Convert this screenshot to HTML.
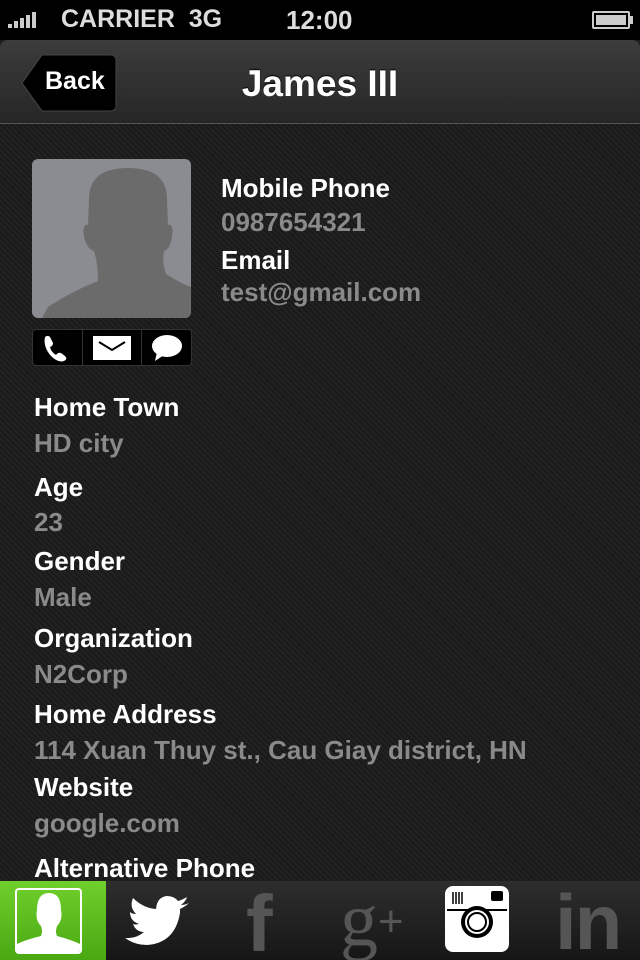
<!DOCTYPE html>
<html><head><meta charset="utf-8"><style>
*{margin:0;padding:0;box-sizing:border-box}
html,body{width:640px;height:960px;overflow:hidden}
body{background:#1e1e1e;font-family:"Liberation Sans",Arial,Helvetica,sans-serif;position:relative;
background-image:repeating-linear-gradient(45deg,#222 0 2px,#1a1a1a 2px 4px)}
.t{position:absolute;left:0;font-weight:bold;font-size:26px;line-height:28px;white-space:nowrap}
.l{color:#fff}.v{color:#8a8a8a}
</style></head><body>
<div style="position:absolute;left:0;top:0;width:640px;height:40px;background:#000"></div>
<div style="position:absolute;left:8px;top:12px;display:flex;align-items:flex-end;gap:2px">
<div style="width:4px;height:4px;background:#ccc"></div><div style="width:4px;height:7px;background:#ccc"></div><div style="width:4px;height:10px;background:#ccc"></div><div style="width:4px;height:13px;background:#ccc"></div><div style="width:4px;height:16px;background:#ccc"></div></div>
<div style="position:absolute;left:61px;top:5px;color:#ddd;font-size:25px;font-weight:bold">CARRIER &nbsp;3G</div>
<div style="position:absolute;left:286px;top:5px;color:#ddd;font-size:26px;font-weight:bold">12:00</div>
<div style="position:absolute;left:592px;top:11px;width:38px;height:18px;border:2px solid #ccc;border-radius:2px;padding:2px"><div style="background:#ccc;width:100%;height:100%"></div></div>
<div style="position:absolute;left:630px;top:16px;width:3px;height:8px;background:#ccc"></div>
<div style="position:absolute;left:0;top:40px;width:640px;height:84px;background:linear-gradient(#3c3c3c,#262626);border-radius:8px 8px 0 0;border-bottom:1px solid #555"></div>
<svg style="position:absolute;left:20px;top:54px" width="98" height="58"><path d="M22 1H90Q96 1 96 7V51Q96 57 90 57H22L2 29Z" fill="#000" stroke="#444" stroke-width="1"/></svg>
<div style="position:absolute;left:45px;top:67px;color:#fff;font-size:25px;font-weight:bold">Back</div>
<div style="position:absolute;left:0;width:640px;top:63px;text-align:center;color:#fff;font-size:37px;font-weight:bold;text-shadow:0 -1px 1px #000">James III</div>
<div style="position:absolute;left:32px;top:159px;width:159px;height:159px;background:#8a8c92;border-radius:6px;overflow:hidden">
<svg width="159" height="159"><path d="M57 40Q57 9 96 9Q135 9 135 40L136 66Q142 64 140 78Q138 90 132 92Q130 105 134 115Q150 125 159 128V159H10L16 148Q40 132 66 122Q66 105 62 92Q55 90 52 78Q50 64 56 66Z" fill="#6b6b6b"/></svg></div>
<div style="position:absolute;left:32px;top:329px;width:160px;height:37px;background:#000;border:1px solid #333;border-radius:4px"></div>
<div style="position:absolute;left:82px;top:330px;width:1px;height:35px;background:#333"></div>
<div style="position:absolute;left:141px;top:330px;width:1px;height:35px;background:#333"></div>
<svg style="position:absolute;left:40px;top:333px" width="30" height="30"><path d="M5 4Q9 1 11 6L13 10Q13 13 10 14Q11 19 16 22Q18 19 21 20L25 23Q28 26 24 28Q18 30 11 23Q3 14 5 4Z" fill="#fff"/></svg>
<svg style="position:absolute;left:93px;top:336px" width="38" height="24"><rect width="38" height="24" fill="#fff"/><path d="M6 6L19 14L32 6" stroke="#000" stroke-width="2" fill="none"/></svg>
<svg style="position:absolute;left:151px;top:334px" width="32" height="28"><ellipse cx="16" cy="12" rx="15" ry="11" fill="#fff"/><path d="M6 18L4 27L13 21Z" fill="#fff"/></svg>
<div class="t l" style="left:221px;top:174px">Mobile Phone</div>
<div class="t v" style="left:221px;top:208px">0987654321</div>
<div class="t l" style="left:221px;top:246px">Email</div>
<div class="t v" style="left:221px;top:278px">test@gmail.com</div>
<div class="t l" style="left:34px;top:393px">Home Town</div>
<div class="t v" style="left:34px;top:429px">HD city</div>
<div class="t l" style="left:34px;top:473px">Age</div>
<div class="t v" style="left:34px;top:508px">23</div>
<div class="t l" style="left:34px;top:547px">Gender</div>
<div class="t v" style="left:34px;top:583px">Male</div>
<div class="t l" style="left:34px;top:624px">Organization</div>
<div class="t v" style="left:34px;top:660px">N2Corp</div>
<div class="t l" style="left:34px;top:700px">Home Address</div>
<div class="t v" style="left:34px;top:736px">114 Xuan Thuy st., Cau Giay district, HN</div>
<div class="t l" style="left:34px;top:773px">Website</div>
<div class="t v" style="left:34px;top:809px">google.com</div>
<div class="t l" style="left:34px;top:854px">Alternative Phone</div>
<div style="position:absolute;left:0;top:881px;width:640px;height:79px;background:linear-gradient(#2e2e2e,#161616)"></div>
<div style="position:absolute;left:0;top:881px;width:106px;height:79px;background:linear-gradient(#6fd02c,#4aa812)"></div>
<div style="position:absolute;left:15px;top:888px;width:67px;height:66px;border:2px solid #fff;border-radius:4px;overflow:hidden">
<svg width="63" height="62"><path d="M20 20Q20 3 32 3Q44 3 44 20Q46 30 40 36Q38 42 40 46Q55 50 63 54V62H0V54Q8 50 24 46Q26 42 24 36Q18 30 20 20Z" fill="#fff"/></svg></div>
<svg style="position:absolute;left:125px;top:895px" width="66" height="54"><path d="M64 8Q60 10 56 10Q61 6 62 2Q57 5 53 6Q49 1 42 1Q32 2 31 14Q18 13 8 3Q4 12 11 19Q7 19 5 17Q5 26 14 29Q10 30 8 29Q11 37 19 37Q11 44 0 43Q10 50 22 50Q50 48 55 18V14Q61 11 64 8Z" fill="#fff"/></svg>
<div style="position:absolute;left:246px;top:884px;font-size:80px;font-weight:bold;color:#555;line-height:80px">f</div>
<div style="position:absolute;left:340px;top:880px;font-size:76px;font-family:'Liberation Serif',serif;color:#555;line-height:80px">g<span style="font-size:44px;vertical-align:top;position:relative;top:2px;font-family:'Liberation Sans'">+</span></div>
<svg style="position:absolute;left:445px;top:886px" width="64" height="66"><rect width="64" height="66" rx="8" fill="#fff"/><path d="M2 24H62" stroke="#000" stroke-width="2"/><circle cx="32" cy="36" r="16" fill="#000"/><circle cx="32" cy="36" r="12" fill="#fff"/><circle cx="32" cy="36" r="9" fill="none" stroke="#000" stroke-width="2"/><rect x="46" y="5" width="12" height="10" rx="2" fill="#000"/><path d="M8 6V18M11 6V18M14 6V18M17 6V18" stroke="#000" stroke-width="1.5"/></svg>
<div style="position:absolute;left:555px;top:882px;font-size:78px;font-weight:bold;color:#555;line-height:80px;letter-spacing:-2px">in</div>
</body></html>
